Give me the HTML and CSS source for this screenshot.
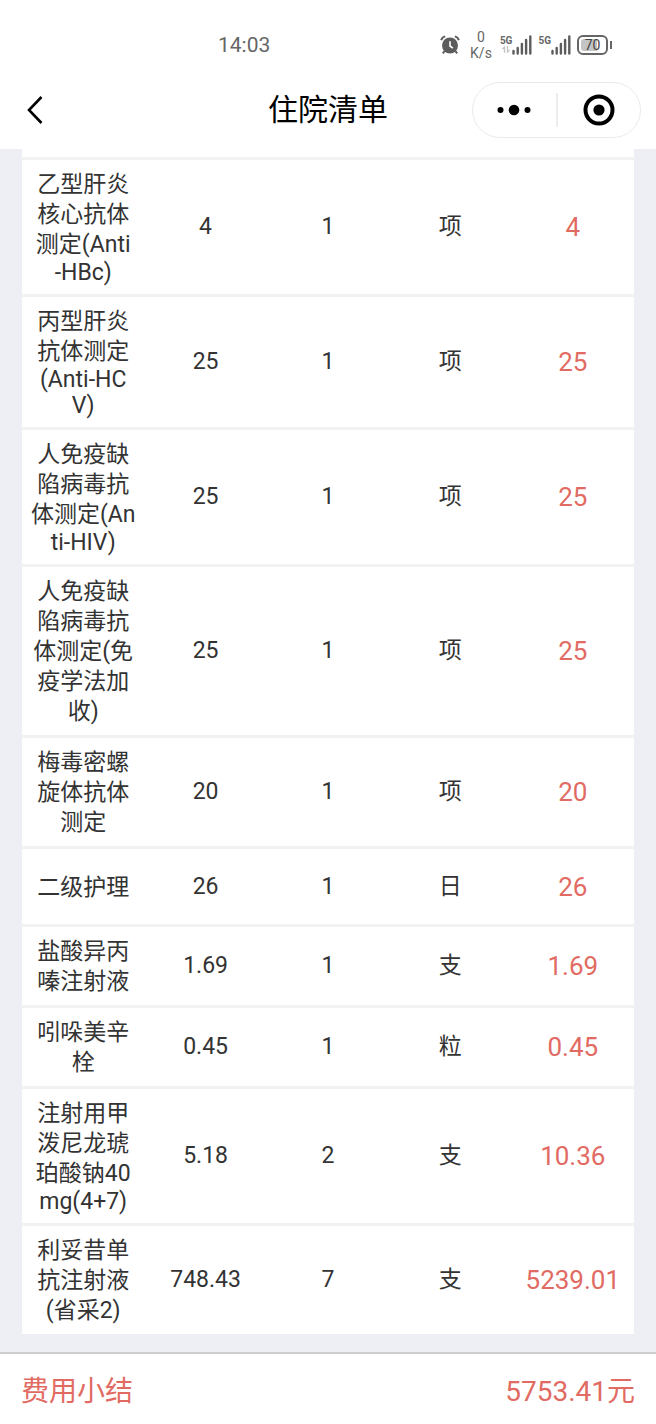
FILE: index.html
```html
<!DOCTYPE html>
<html lang="zh-CN">
<head>
    <meta charset="UTF-8">
    <meta name="viewport" content="width=device-width, initial-scale=1.0">
    <title>住院清单</title>
    <link rel="stylesheet" href="styles.css">
</head>
<body>
    <div class="status-bar">
        <time class="clock">14:03</time>
        <div class="status-icons">
            <svg class="alarm" width="20" height="20" viewBox="0 0 20 20">
                <circle cx="10" cy="10.5" r="8" fill="#5c5c5c"/>
                <path d="M1.2 5.2Q2 2.2 5.2 1.4M18.8 5.2Q18 2.2 14.8 1.4M4.6 16.2L2.8 18.4M15.4 16.2L17.2 18.4" fill="none" stroke="#5c5c5c" stroke-width="2"/>
                <path d="M10 6.3V11L12.8 13.2" fill="none" stroke="#fff" stroke-width="1.6"/>
            </svg>
            <div class="speed"><span>0</span><span>K/s</span></div>
            <div class="signal">
                <div class="network">
                    <span>5G</span>
                    <svg width="8" height="7" viewBox="0 0 8 7">
                        <path d="M2.5 7V1L0.5 3M5.5 0V6L7.5 4" fill="none" stroke="#c4c4c4" stroke-width="1.3"/>
                    </svg>
                </div>
                <svg class="bars" width="20" height="20" viewBox="0 0 20 20">
                    <path d="M1.5 16V18.5M5.7 13V18.5M9.9 9V18.5M14.1 5V18.5M18.3 1.5V18.5" stroke="#5c5c5c" stroke-width="2.4" stroke-linecap="round"/>
                </svg>
            </div>
            <div class="signal">
                <div class="network"><span>5G</span></div>
                <svg class="bars" width="20" height="20" viewBox="0 0 20 20">
                    <path d="M1.5 16V18.5M5.7 13V18.5M9.9 9V18.5M14.1 5V18.5M18.3 1.5V18.5" stroke="#5c5c5c" stroke-width="2.4" stroke-linecap="round"/>
                </svg>
            </div>
            <div class="battery"><span class="battery-level">70</span></div>
        </div>
    </div>

    <header class="nav-bar">
        <button class="back-btn" aria-label="返回">
            <svg width="18" height="30" viewBox="0 0 18 30">
                <path d="M15.5 2L3 15L15.5 28" fill="none" stroke="#000" stroke-width="2.6"/>
            </svg>
        </button>
        <h1>住院清单</h1>
        <div class="capsule">
            <button aria-label="更多">
                <svg width="34" height="12" viewBox="0 0 34 12">
                    <circle cx="3.5" cy="6" r="3"/>
                    <circle cx="17" cy="6" r="5.3"/>
                    <circle cx="30.5" cy="6" r="3"/>
                </svg>
            </button>
            <button aria-label="关闭">
                <svg width="32" height="32" viewBox="0 0 32 32">
                    <circle cx="16" cy="16" r="13.5" fill="none" stroke="#000" stroke-width="4"/>
                    <circle cx="16" cy="16" r="5.6"/>
                </svg>
            </button>
        </div>
    </header>

    <main>
        <div class="list">
            <table>
                <tbody>
                    <tr>
                        <td class="name"><span>乙型肝炎</span><span>核心抗体</span><span>测定(Anti</span><span class="latin">-HBc)</span></td>
                        <td>4</td><td>1</td><td>项</td><td class="amount">4</td>
                    </tr>
                    <tr>
                        <td class="name"><span>丙型肝炎</span><span>抗体测定</span><span class="latin">(Anti-HC</span><span class="latin">V)</span></td>
                        <td>25</td><td>1</td><td>项</td><td class="amount">25</td>
                    </tr>
                    <tr>
                        <td class="name"><span>人免疫缺</span><span>陷病毒抗</span><span>体测定(An</span><span class="latin">ti-HIV)</span></td>
                        <td>25</td><td>1</td><td>项</td><td class="amount">25</td>
                    </tr>
                    <tr>
                        <td class="name"><span>人免疫缺</span><span>陷病毒抗</span><span>体测定(免</span><span>疫学法加</span><span>收)</span></td>
                        <td>25</td><td>1</td><td>项</td><td class="amount">25</td>
                    </tr>
                    <tr>
                        <td class="name"><span>梅毒密螺</span><span>旋体抗体</span><span>测定</span></td>
                        <td>20</td><td>1</td><td>项</td><td class="amount">20</td>
                    </tr>
                    <tr>
                        <td class="name"><span>二级护理</span></td>
                        <td>26</td><td>1</td><td>日</td><td class="amount">26</td>
                    </tr>
                    <tr>
                        <td class="name"><span>盐酸异丙</span><span>嗪注射液</span></td>
                        <td>1.69</td><td>1</td><td>支</td><td class="amount">1.69</td>
                    </tr>
                    <tr>
                        <td class="name"><span>吲哚美辛</span><span>栓</span></td>
                        <td>0.45</td><td>1</td><td>粒</td><td class="amount">0.45</td>
                    </tr>
                    <tr>
                        <td class="name"><span>注射用甲</span><span>泼尼龙琥</span><span>珀酸钠40</span><span class="latin">mg(4+7)</span></td>
                        <td>5.18</td><td>2</td><td>支</td><td class="amount">10.36</td>
                    </tr>
                    <tr>
                        <td class="name"><span>利妥昔单</span><span>抗注射液</span><span>(省采2)</span></td>
                        <td>748.43</td><td>7</td><td>支</td><td class="amount">5239.01</td>
                    </tr>
                </tbody>
            </table>
        </div>
    </main>

    <footer class="summary">
        <span>费用小结</span>
        <span>5753.41元</span>
    </footer>
</body>
</html>
```
FILE: styles.css
```css
* {
    margin: 0;
    padding: 0;
    box-sizing: border-box;
}

body {
    display: flex;
    flex-direction: column;
    min-height: 100vh;
    background-color: #eeeff4;
    color: #333;
    font-family: Roboto, "Noto Sans CJK SC", sans-serif;
    font-size: 23px;
}

button {
    display: flex;
    align-items: center;
    justify-content: center;
    border: none;
    background: none;
    cursor: pointer;
}

/* Status bar */
.status-bar {
    display: flex;
    justify-content: space-between;
    align-items: center;
    height: 70px;
    padding: 20px 48px 0 218px;
    background-color: #fff;
    color: #666;
}

.clock {
    font-size: 21px;
}

.status-icons {
    display: flex;
    align-items: center;
    gap: 6px;
}

.alarm {
    margin-right: 4px;
}

.speed {
    display: flex;
    flex-direction: column;
    align-items: center;
    margin-right: 2px;
    font-size: 14px;
    line-height: 16px;
}

.signal {
    display: flex;
    align-items: center;
}

.network {
    display: flex;
    flex-direction: column;
    align-items: center;
    height: 20px;
    font-size: 10px;
    font-weight: bold;
    line-height: 11px;
}

.battery {
    position: relative;
    width: 31px;
    padding: 2px;
    border: 2px solid #666;
    border-radius: 6px;
}

.battery::after {
    content: "";
    position: absolute;
    top: 4px;
    right: -6px;
    width: 2px;
    height: 8px;
    background-color: #666;
}

.battery-level {
    display: block;
    border-radius: 3px;
    background: linear-gradient(to right, #c4c4c4 70%, #fff 70%);
    color: #444;
    font-size: 14px;
    line-height: 12px;
    text-align: center;
}

/* Navigation bar */
.nav-bar {
    display: grid;
    grid-template-columns: 1fr auto 1fr;
    align-items: center;
    height: 79px;
    padding: 0 15px;
    background-color: #fff;
}

.back-btn {
    justify-self: start;
    width: 40px;
    height: 56px;
}

.nav-bar h1 {
    color: #000;
    font-size: 30px;
    font-weight: normal;
    line-height: 40px;
}

.capsule {
    display: flex;
    align-items: center;
    justify-self: end;
    width: 169px;
    height: 56px;
    border: 1px solid #ebebeb;
    border-radius: 28px;
}

.capsule button {
    flex: 1;
    height: 34px;
}

.capsule button + button {
    border-left: 2px solid #ededed;
}

/* Fee list */
main {
    flex: 1;
    padding: 0 22px 18px;
}

.list {
    padding-top: 8px;
    background-color: #fff;
}

table {
    width: 100%;
    border-collapse: collapse;
    table-layout: fixed;
}

tr {
    border-top: 3px solid #f2f2f2;
}

td {
    height: 78px;
    padding: 9px 0;
    line-height: 30px;
    text-align: center;
    vertical-align: middle;
}

.name {
    padding: 10px 0 8px;
}

.name span {
    display: block;
}

.name .latin {
    line-height: 26px;
}

.amount {
    color: #e16b63;
    font-size: 26px;
}

/* Summary */
.summary {
    display: flex;
    justify-content: space-between;
    align-items: center;
    height: 72px;
    padding: 0 21px;
    border-top: 2px solid #cfcfcf;
    background-color: #fff;
    color: #e16b63;
    font-size: 28px;
}
```
